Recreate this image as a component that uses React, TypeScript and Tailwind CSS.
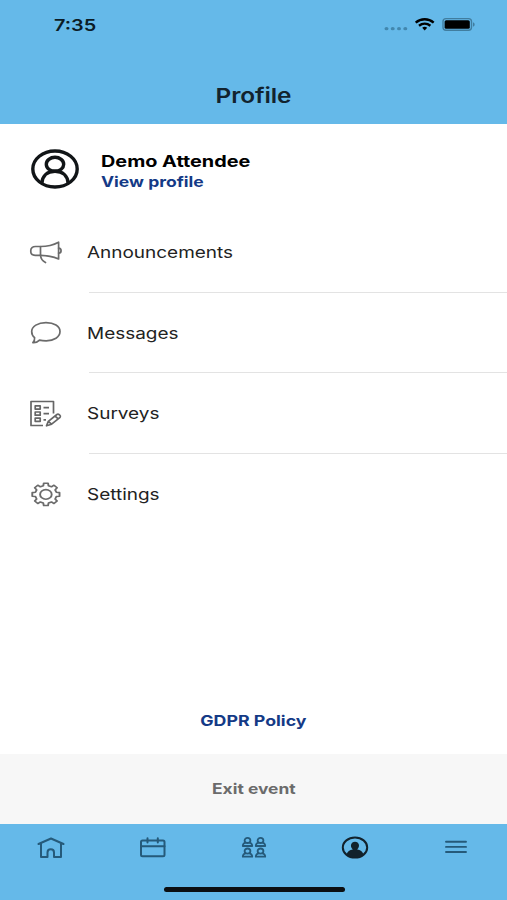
import React from 'react';

const gearPath = (() => {
  const points: string[] = [];
  for (let i = 0; i < 8; i++) {
    const base = i * 45;
    const steps: [number, number][] = [[-14, 10.8], [-9, 13.8], [9, 13.8], [14, 10.8]];
    steps.forEach(([offset, r]) => {
      const a = ((base + offset) * Math.PI) / 180;
      points.push(`${(15 + r * Math.cos(a)).toFixed(2)} ${(15 + r * Math.sin(a)).toFixed(2)}`);
    });
  }
  return `M${points.join('L')}Z`;
})();

const MegaphoneIcon = () => (
  <svg width="34" height="28" viewBox="0 0 34 28" fill="none" stroke="#6b6b6b" strokeWidth="1.7" strokeLinejoin="round">
    <path d="M11.5 8.5H6.5C3.5 8.5 1.8 10 1.8 12.3v1.5c0 2.2 1.7 3.5 4.7 3.5h5z" />
    <path d="M11.5 8.5C18 8.5 24 7.2 29.6 4.2v16.8C24 18.5 18 17.3 11.5 17.3" />
    <path d="M29.6 10.2c3.3.2 3.3 4.8 0 5M11.5 17.3c.3 3.6 1.7 5.6 5 7.2" strokeLinecap="round" />
  </svg>
);

const BubbleIcon = () => (
  <svg width="34" height="28" viewBox="0 0 34 28" fill="none" stroke="#6b6b6b" strokeWidth="1.7" strokeLinejoin="round">
    <path d="M17 4.6C8.9 4.6 2.7 8.4 2.7 13.5c0 2.7 1 4.6 2.9 6.1.2 2-.3 3.6-1.7 5 2.5.2 4.8-.6 6.6-2.5 2 .5 4.2.7 6.7.7C25 22.8 31 19 31 13.6S25 4.6 17 4.6Z" />
  </svg>
);

const SurveyIcon = () => (
  <svg width="34" height="28" viewBox="0 0 34 28" fill="none" stroke="#666" strokeWidth="1.7" strokeLinejoin="round">
    <path d="M14 26.5H2v-24h22.5v12" />
    <path d="M6.2 6.9h5v3.2h-5zM6.2 13h5v3.2h-5zM6.2 19.1h5v3.2h-5z" />
    <path d="M14.5 8.6h5.5M14.5 14.7h5.5M14.5 20.8h2.5" />
    <path d="M17.500 26.8l1.800-4.400 8.600-6.900c1.500-1 4.500 1.100 3.200 2.800l-8.500 6.900zM19.300 22.400l3.300 2.800M26 17l3.200 2.800" />
  </svg>
);

const GearIcon = () => (
  <svg width="34" height="28" viewBox="0 0 34 28" fill="none" stroke="#6b6b6b" strokeWidth="1.9" strokeLinejoin="round">
    <g transform="translate(1.9 2.1) scale(1 .82)">
      <path d={gearPath} />
      <circle cx="15" cy="15" r="5.8" />
    </g>
  </svg>
);

const AvatarIcon = () => (
  <svg width="50" height="42" viewBox="0 0 50 42" fill="none" stroke="#111517" strokeWidth="3.4">
    <ellipse cx="25" cy="22" rx="22.2" ry="18" />
    <ellipse cx="25" cy="17.3" rx="8.7" ry="7" />
    <path d="M11.8 36.3c.6-7.6 5.500-12 13.200-12s12.600 4.400 13.200 12" />
  </svg>
);

const HomeIcon = () => (
  <svg width="28" height="24" viewBox="0 0 28 24" fill="none" stroke="#255a7a" strokeWidth="2" strokeLinecap="round" strokeLinejoin="round">
    <path d="M1.5 8 14 2.500l12.500 5.500M4 7.500v13.500h6.500v-4.500c0-4.200 6.500-4.200 6.500 0v4.500h7V7.500" />
  </svg>
);

const CalendarIcon = () => (
  <svg width="28" height="24" viewBox="0 0 28 24" fill="none" stroke="#255a7a" strokeWidth="2" strokeLinecap="round">
    <rect x="3" y="4.500" width="23.500" height="15.800" rx="1.500" />
    <path d="M3 10.300h23.500M9.500 2.200v4.300M19.800 2.200v4.300" />
  </svg>
);

const Person = ({ x, y }: { x: number; y: number }) => (
  <g transform={`translate(${x} ${y})`}>
    <ellipse cx="5.5" cy="3.4" rx="2.9" ry="2.6" />
    <path d="M3.6 5.6C1.700 6 .8 7.200.8 9h9.400c0-1.800-.9-3-2.800-3.400" />
  </g>
);

const PeopleIcon = () => (
  <svg width="28" height="24" viewBox="0 0 28 24" fill="none" stroke="#255a7a" strokeWidth="1.8" strokeLinejoin="round">
    <Person x={2} y={1} />
    <Person x={15} y={1} />
    <Person x={2} y={11.7} />
    <Person x={15} y={11.7} />
  </svg>
);

const ProfileIcon = () => (
  <svg width="28" height="24" viewBox="0 0 28 24">
    <ellipse cx="14" cy="11.5" rx="12.2" ry="10.1" fill="none" stroke="#12222c" strokeWidth="2" />
    <path d="M5.500 18.300c1-3 3-4.300 6.300-4.900-3.200-2.700-2-7.700 2.200-7.700s5.400 5 2.200 7.700c3.300.6 5.300 1.900 6.300 4.900-4.500 4.100-12.500 4.100-17 0Z" fill="#12222c" />
  </svg>
);

const MenuIcon = () => (
  <svg width="28" height="24" viewBox="0 0 28 24" stroke="#255a7a" strokeWidth="1.9" strokeLinecap="round">
    <path d="M4 5.800h20M4 10.900h20M4 16h20" />
  </svg>
);

const menuItems = [
  { label: 'Announcements', icon: <MegaphoneIcon /> },
  { label: 'Messages', icon: <BubbleIcon /> },
  { label: 'Surveys', icon: <SurveyIcon /> },
  { label: 'Settings', icon: <GearIcon /> },
];

const StatusBar = () => (
  <div className="flex h-12 items-center justify-between pr-[32px] pl-[54px]">
    <span className="origin-left scale-x-[1.24] pt-px text-[16px] leading-6 font-semibold text-[#0b1c26]">7:35</span>
    <svg width="92" height="16" viewBox="0 0 92 16">
      <g fill="#4287ae">
        <ellipse cx="3.5" cy="12.7" rx="2" ry="1.6" />
        <ellipse cx="9.7" cy="12.7" rx="2" ry="1.6" />
        <ellipse cx="16" cy="12.7" rx="2" ry="1.6" />
        <ellipse cx="22.3" cy="12.7" rx="2" ry="1.6" />
      </g>
      <g fill="none" stroke="#000" strokeWidth="2.4">
        <path d="M32.700 6.600c5.200-4.400 12.800-4.400 18 0M36 9.700c3.400-2.700 8-2.700 11.400 0" />
        <path d="M39.200 11.800c1.700-1.300 3.300-1.300 5 0l-2.500 2.600z" fill="#000" stroke="none" />
      </g>
      <rect x="60" y="2.600" width="28.500" height="11.600" rx="3" fill="none" stroke="#407d9f" strokeWidth="1.4" />
      <rect x="61.600" y="4.200" width="25.200" height="8.600" rx="1.6" fill="#000" />
      <path d="M90 6.300c2.200.8 2.200 3.700 0 4.400z" fill="#407d9f" />
    </svg>
  </div>
);

export default function App() {
  return (
    <div className="flex h-[900px] w-[507px] flex-col overflow-hidden bg-white font-['Inter',sans-serif]">
      <header className="h-[124px] bg-[#65b9e9]">
        <StatusBar />
        <h1 className="mt-[33px] origin-center scale-x-[1.19] text-center text-[20.5px] leading-[30px] font-semibold tracking-[-0.1px] text-[#12232e]">Profile</h1>
      </header>

      <main className="flex flex-1 flex-col">
        <section className="flex h-[88px] items-center pl-[30px]">
          <AvatarIcon />
          <div className="ml-[20.5px] flex flex-col items-start pt-1.5">
            <span className="origin-left scale-x-[1.24] text-[16px] leading-[21px] font-bold text-black">Demo Attendee</span>
            <a className="origin-left scale-x-[1.21] text-[14.5px] leading-5 font-bold text-[#143a86]">View profile</a>
          </div>
        </section>

        <ul>
          {menuItems.map((item, index) => (
            <li key={item.label} className="h-[80.6px]">
              <div className="flex h-[79.6px] items-center pl-[29px]">
                {item.icon}
                <span className="ml-[23.5px] origin-left scale-x-[1.185] pt-px text-[16px] leading-6 text-[#222222]">{item.label}</span>
              </div>
              {index < menuItems.length - 1 && <div className="ml-[89px] h-px bg-[#e3e3e3]" />}
            </li>
          ))}
        </ul>

        <div className="mt-auto flex h-[67px] items-center justify-center">
          <a className="scale-x-[1.225] text-[14.5px] leading-5 font-bold text-[#143a86]">GDPR Policy</a>
        </div>
        <button className="flex h-[70px] items-center justify-center bg-[#f7f7f7]">
          <span className="scale-x-[1.2] text-[14.5px] leading-5 font-bold text-[#6b6b6b]">Exit event</span>
        </button>
      </main>

      <nav className="flex h-[76px] flex-col items-center bg-[#65b9e9]">
        <div className="mt-3 flex w-full justify-between px-[37px]">
          <HomeIcon />
          <CalendarIcon />
          <PeopleIcon />
          <ProfileIcon />
          <MenuIcon />
        </div>
        <div className="mt-[27px] ml-px h-[5px] w-[181px] rounded-full bg-[#0b0f12]" />
      </nav>
    </div>
  );
}
